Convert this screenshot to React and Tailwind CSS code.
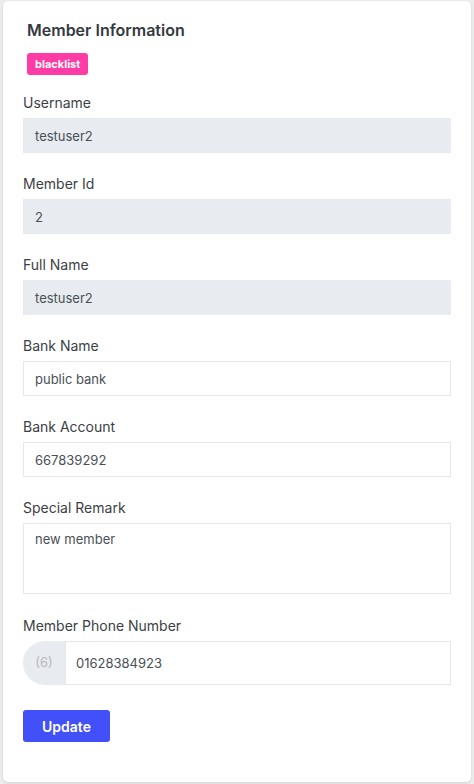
import React from "react";

const fieldBase =
  "w-full h-[35px] px-[11px] text-[13px] text-[#495057] outline-none rounded-none";

function Label({ children }) {
  return (
    <div className="text-[14px] leading-[21px] text-[#3b3f45] mb-[5px]">{children}</div>
  );
}

function ReadOnlyField({ label, value }) {
  return (
    <div className="mb-5">
      <Label>{label}</Label>
      <input
        readOnly
        value={value}
        className={`${fieldBase} bg-[#e8ebef] border border-[#e8ebef]`}
      />
    </div>
  );
}

function TextField({ label, value }) {
  return (
    <div className="mb-5">
      <Label>{label}</Label>
      <input
        readOnly
        value={value}
        className={`${fieldBase} bg-white border border-[#e6e7ec]`}
      />
    </div>
  );
}

export default function App() {
  return (
    <div
      className="min-h-[784px] bg-[#ededed] pt-px pl-[3px]"
      style={{ fontFamily: "Inter, 'Noto Sans', sans-serif" }}
    >
      <div className="w-[468px] bg-white rounded-[5px] shadow-[0_1px_3px_rgba(0,0,0,0.12)] px-5 pt-[17px] pb-10">
        <h2 className="px-1 text-[16px] leading-6 font-semibold text-[#343a40]">
          Member Information
        </h2>
        <div className="px-1 mt-[11px] flex">
          <span className="flex items-center h-[22px] px-2 rounded-[3px] bg-[#ff3ba5] text-white text-[11px] leading-none font-bold">
            blacklist
          </span>
        </div>

        <div className="mt-[17px]">
          <ReadOnlyField label="Username" value="testuser2" />
          <ReadOnlyField label="Member Id" value="2" />
          <ReadOnlyField label="Full Name" value="testuser2" />
          <TextField label="Bank Name" value="public bank" />
          <TextField label="Bank Account" value="667839292" />

          <div className="mb-[21px]">
            <Label>Special Remark</Label>
            <textarea
              readOnly
              value="new member"
              className="block w-full h-[71px] resize-none px-[11px] pt-[6px] text-[13px] text-[#495057] bg-white border border-[#e6e7ec] outline-none"
            />
          </div>

          <div>
            <Label>Member Phone Number</Label>
            <div className="flex h-[44px]">
              <div className="w-[42px] shrink-0 flex items-center justify-center bg-[#e8ebef] rounded-l-[22px] text-[13px] text-[#b7babf]">
                (6)
              </div>
              <input
                readOnly
                value="01628384923"
                className="flex-1 min-w-0 h-full px-[10px] text-[13px] text-[#495057] bg-white border border-[#e6e7ec] outline-none"
              />
            </div>
          </div>

          <button className="block mt-[25px] w-[87px] h-[32px] rounded-[3px] bg-[#4150f9] text-white text-[14px] font-semibold">
            Update
          </button>
        </div>
      </div>
    </div>
  );
}
